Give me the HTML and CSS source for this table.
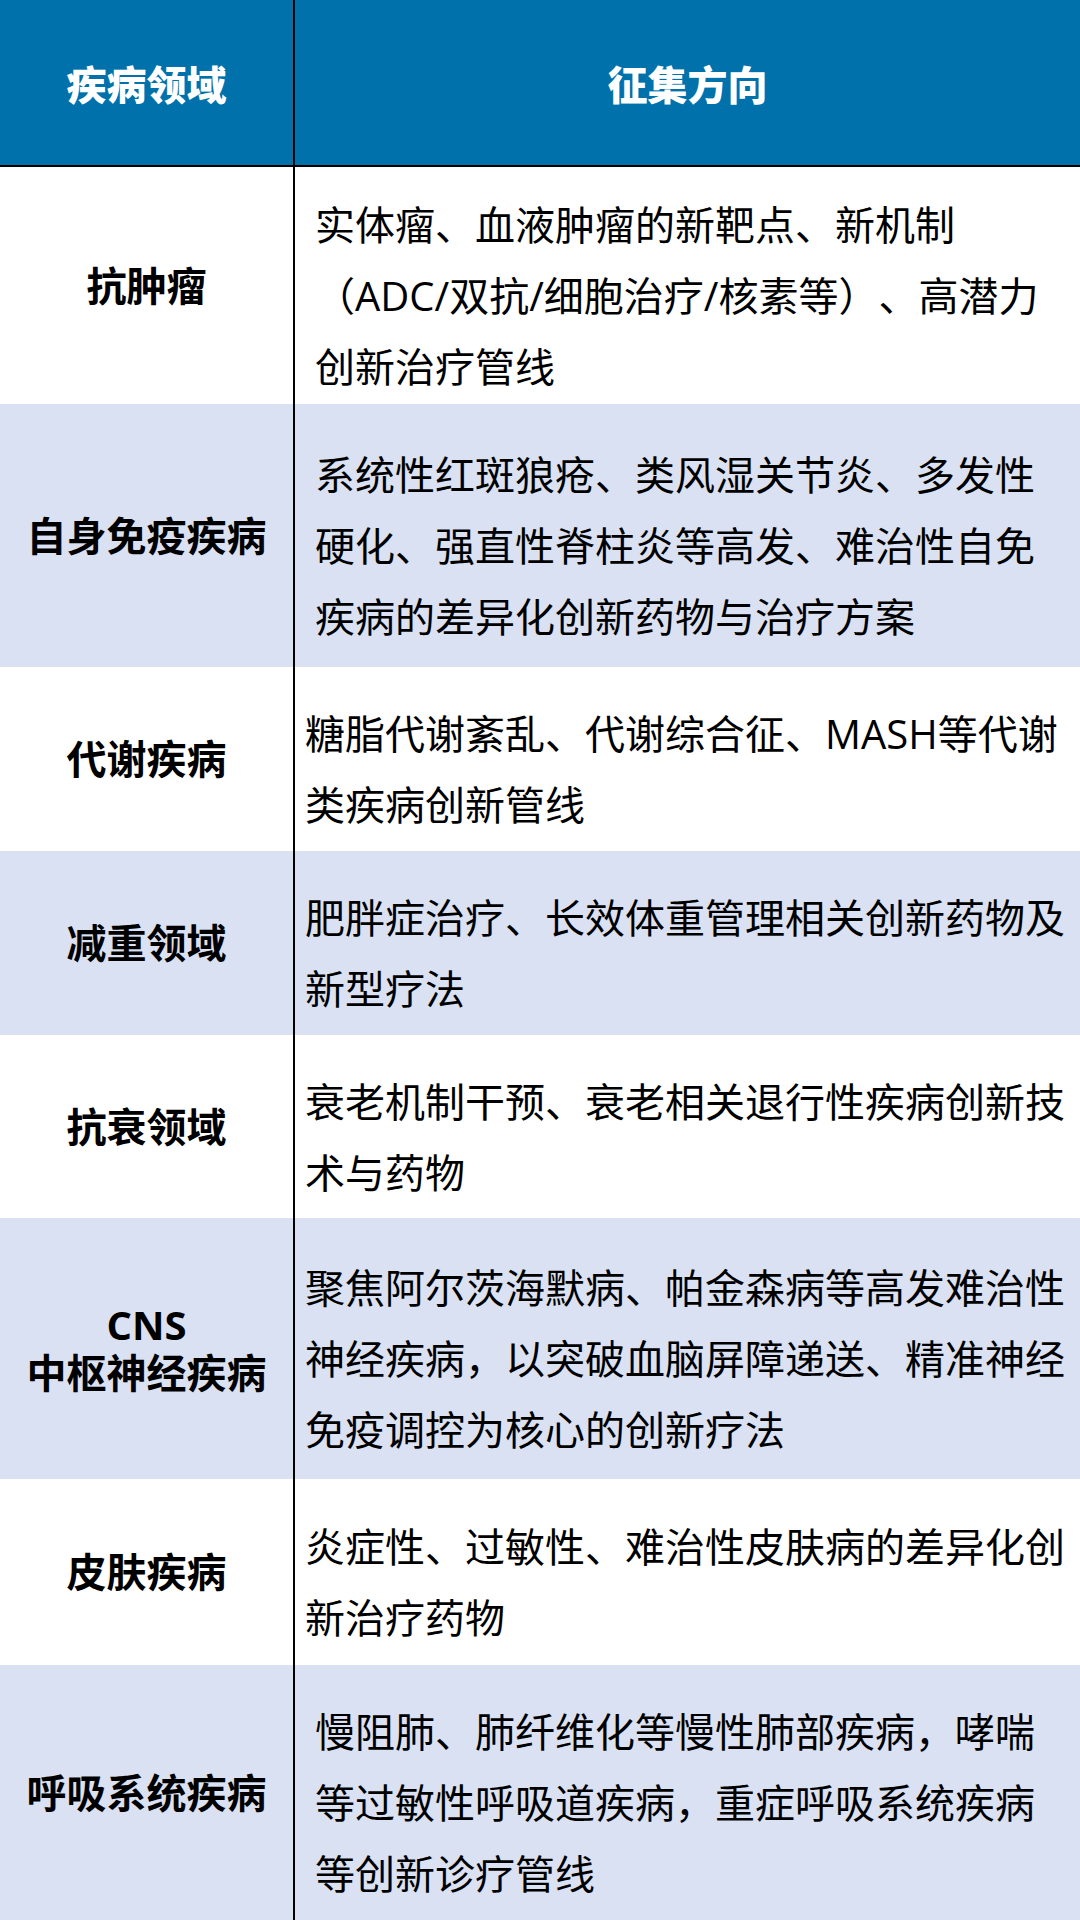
FILE: index.html
```html
<!DOCTYPE html>
<html lang="zh-CN">
<head>
<meta charset="utf-8">
<title>疾病领域 征集方向</title>
<link rel="stylesheet" href="styles.css">
</head>
<body>
<div class="table">
  <div class="cell head left">疾病领域</div>
  <div class="cell head right">征集方向</div>

  <div class="cell label">抗肿瘤</div>
  <div class="cell desc wide">实体瘤、血液肿瘤的新靶点、新机制<br>（ADC/双抗/细胞治疗/核素等）、高潜力<br>创新治疗管线</div>

  <div class="cell label alt">自身免疫疾病</div>
  <div class="cell desc wide alt">系统性红斑狼疮、类风湿关节炎、多发性<br>硬化、强直性脊柱炎等高发、难治性自免<br>疾病的差异化创新药物与治疗方案</div>

  <div class="cell label">代谢疾病</div>
  <div class="cell desc">糖脂代谢紊乱、代谢综合征、MASH等代谢<br>类疾病创新管线</div>

  <div class="cell label alt">减重领域</div>
  <div class="cell desc alt">肥胖症治疗、长效体重管理相关创新药物及<br>新型疗法</div>

  <div class="cell label">抗衰领域</div>
  <div class="cell desc">衰老机制干预、衰老相关退行性疾病创新技<br>术与药物</div>

  <div class="cell label alt stack"><span class="line">CNS</span><span class="line">中枢神经疾病</span></div>
  <div class="cell desc alt">聚焦阿尔茨海默病、帕金森病等高发难治性<br>神经疾病，以突破血脑屏障递送、精准神经<br>免疫调控为核心的创新疗法</div>

  <div class="cell label">皮肤疾病</div>
  <div class="cell desc">炎症性、过敏性、难治性皮肤病的差异化创<br>新治疗药物</div>

  <div class="cell label alt">呼吸系统疾病</div>
  <div class="cell desc wide alt">慢阻肺、肺纤维化等慢性肺部疾病，哮喘<br>等过敏性呼吸道疾病，重症呼吸系统疾病<br>等创新诊疗管线</div>
</div>
</body>
</html>
```

FILE: styles.css
```css
html, body {
  margin: 0;
  padding: 0;
  background: #ffffff;
  overflow: hidden;
}

body {
  width: 1080px;
  height: 1920px;
  font-family: "Open Sans", "Noto Sans CJK SC", sans-serif;
  color: #000000;
  text-spacing-trim: space-all;
}

.table {
  display: grid;
  grid-template-columns: 295px 785px;
  grid-template-rows: 167px 237px 263px 184px 184px 183px 261px 186px 255px;
}

.cell {
  display: flex;
  align-items: center;
  box-sizing: border-box;
  background: #ffffff;
}

.cell.alt {
  background: #d9e1f2;
}

.head {
  background: #0071aa;
  color: #ffffff;
  font-family: "Noto Sans CJK SC", sans-serif;
  font-weight: 900;
  font-size: 40px;
  justify-content: center;
  border-bottom: 2px solid #000000;
}

.left,
.label {
  border-right: 2px solid #000000;
}

.label {
  justify-content: center;
  text-align: center;
  font-family: "Open Sans", "Noto Sans CJK SC", sans-serif;
  font-weight: 700;
  font-size: 40px;
  line-height: 48px;
}

.label.stack {
  flex-direction: column;
  justify-content: center;
  gap: 0;
}

.label .line {
  display: block;
  height: 48px;
  line-height: 48px;
}

.desc {
  font-size: 40px;
  line-height: 71px;
  white-space: nowrap;
  padding: 20px 0 0 10px;
}

.desc.wide {
  padding-left: 20px;
}
```
